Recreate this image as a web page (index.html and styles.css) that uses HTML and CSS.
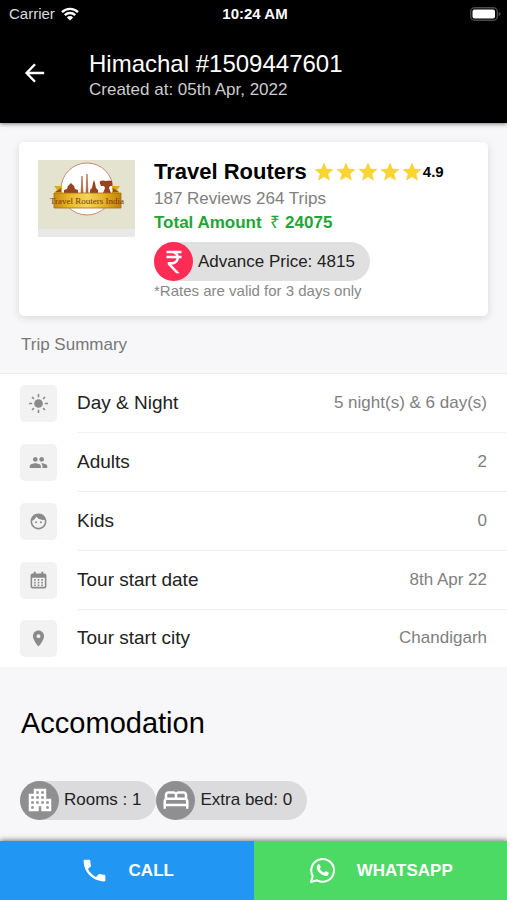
FILE: index.html
```html
<!DOCTYPE html>
<html lang="en">
<head>
<meta charset="utf-8">
<meta name="viewport" content="width=device-width, initial-scale=1">
<title>Himachal #1509447601</title>
<link rel="stylesheet" href="styles.css">
</head>
<body>
<header class="top">
  <div class="status">
    <span class="carrier">Carrier
      <svg class="wifi" viewBox="0 0 18 14" aria-hidden="true"><path d="M1 5.2a11.4 11.4 0 0 1 16 0M3.8 8.1a7.4 7.4 0 0 1 10.4 0" fill="none" stroke="currentColor" stroke-width="2.4"/><path d="M9 13.6 5.9 10.4a4.4 4.4 0 0 1 6.2 0z" fill="currentColor"/></svg>
    </span>
    <span class="clock">10:24 AM</span>
    <svg class="battery" viewBox="0 0 31 14" aria-hidden="true"><rect x=".7" y=".7" width="26.6" height="12.6" rx="4" fill="none" stroke="#4b4b4b" stroke-width="1.4"/><rect x="2.500" y="2.500" width="22.500" height="9" rx="2" fill="#fff"/><path d="M28.6 5v4q2-.6 2-2t-2-2z" fill="#4b4b4b"/></svg>
  </div>
  <div class="bar">
    <button class="back" type="button" aria-label="Back">
      <svg viewBox="0 0 24 24" aria-hidden="true"><path d="M22 12H3.500M12 2.500 2.800 12l9.200 9.500" fill="none" stroke="currentColor" stroke-width="2.600"/></svg>
    </button>
    <div>
      <h1 class="title">Himachal #1509447601</h1>
      <p class="created">Created at: 05th Apr, 2022</p>
    </div>
  </div>
</header>

<main class="content">
  <section class="card">
    <svg class="logo" viewBox="0 0 97 77" role="img" aria-label="Travel Routers India">
      <defs>
        <linearGradient id="gold"><stop offset="0" stop-color="#c98a0c"/><stop offset=".25" stop-color="#e9bd2c"/><stop offset=".5" stop-color="#f2d65c"/><stop offset=".75" stop-color="#e3b021"/><stop offset="1" stop-color="#bf7f08"/></linearGradient>
      </defs>
      <rect width="97" height="77" fill="#e9e9e9"/>
      <rect width="97" height="69" fill="#e4e3d0"/>
      <circle cx="49" cy="29" r="26" fill="#fff" stroke="#c98b74"/>
      <path d="M16 26h8v8h-8l3-4zM82 26h-8v8h8l-3-4z" fill="#e0a81c"/>
      <path d="m17 32 6-4v4zM81 32l-6-4v4z" fill="#a14a16"/>
      <g fill="#96441f">
        <path d="M26 33v-3l3-1 1-3 3-3 3 3 1 3 3 1v3z"/>
        <path d="m43 33 1-17 1 17zM48 33l1-19 1 19z" stroke="#b87545" stroke-width=".8"/>
        <path d="M52 33v-3l2-2 1-5 1-3 1 3 1 5 2 2v3z"/>
        <path d="M62 21q3-1 6 0 3-1 6 0v5h-2l-1 2 2 5H65l2-5-1-2h-3q-2-3-1-5z"/>
      </g>
      <path d="M16 33h67v15H16z" fill="url(#gold)" stroke="#a86d0a" stroke-width=".8"/>
      <text x="49" y="44" class="logo-text">Travel Routers India</text>
    </svg>
    <div class="info">
      <div class="agency">
        <h2 class="name">Travel Routers</h2>
        <span class="rating">
          <svg class="stars" viewBox="0 0 108 20" role="img" aria-label="5 stars">
            <defs><path id="star" d="m10 1.2 2.4 5.9 6.4.5-4.900 4.100 1.500 6.200-5.400-3.300-5.400 3.300 1.500-6.200-4.900-4.100 6.400-.5z" fill="#f9d62f" stroke="#f5c934" stroke-width=".6"/></defs>
            <use href="#star" x="-1"/><use href="#star" x="21"/><use href="#star" x="43"/><use href="#star" x="65"/><use href="#star" x="87"/>
          </svg>
          <b class="score">4.9</b>
        </span>
      </div>
      <p class="reviews">187 Reviews 264 Trips</p>
      <p class="total">Total Amount <span class="amount"><span class="currency">₹</span> 24075</span></p>
      <span class="chip chip-price">
        <span class="chip-icon"><svg viewBox="0 0 24 24" aria-hidden="true"><path d="M13.66 7C13.1 5.82 11.900 5 10.500 5H6V3h12v2h-3.260c.48.58.84 1.260 1.050 2H18v2h-2.020c-.25 2.800-2.610 5-5.480 5h-.73l6.730 7h-2.770L7 14v-2h3.500c1.760 0 3.220-1.300 3.460-3H6V7h7.660z"/></svg></span>
        Advance Price: 4815
      </span>
      <p class="note">*Rates are valid for 3 days only</p>
    </div>
  </section>

  <h2 class="section-label">Trip Summary</h2>
  <dl class="summary">
    <div class="row">
      <span class="tile"><svg viewBox="0 0 24 24" aria-hidden="true"><circle cx="12" cy="12" r="5.500"/><path d="M12 0v4M12 20v4M0 12h4M20 12h4M3.800 3.800l2.400 2.400M17.800 17.800l2.400 2.400M3.800 20.200l2.400-2.400M17.800 6.200l2.400-2.400" stroke="currentColor" stroke-width="2"/></svg></span>
      <div class="line"><dt>Day &amp; Night</dt><dd>5 night(s) &amp; 6 day(s)</dd></div>
    </div>
    <div class="row">
      <span class="tile"><svg viewBox="0 0 24 24" aria-hidden="true"><path d="M16 11c1.660 0 2.990-1.340 2.990-3S17.660 5 16 5s-3 1.340-3 3 1.340 3 3 3zm-8 0c1.660 0 2.990-1.340 2.990-3S9.660 5 8 5 5 6.340 5 8s1.340 3 3 3zm0 2c-2.330 0-7 1.170-7 3.500V19h14v-2.500c0-2.330-4.670-3.500-7-3.500zm8 0c-.29 0-.62.02-.97.05 1.160.84 1.970 1.970 1.970 3.450V19h6v-2.500c0-2.330-4.670-3.500-7-3.500z"/></svg></span>
      <div class="line"><dt>Adults</dt><dd>2</dd></div>
    </div>
    <div class="row">
      <span class="tile"><svg viewBox="0 0 24 24" aria-hidden="true"><path d="M9 11.750a1.250 1.250 0 1 0 0 2.500 1.250 1.250 0 0 0 0-2.500zm6 0a1.250 1.250 0 1 0 0 2.500 1.250 1.250 0 0 0 0-2.500zM12 2C6.480 2 2 6.480 2 12s4.480 10 10 10 10-4.480 10-10S17.520 2 12 2zm0 18c-4.410 0-8-3.590-8-8 0-.29.02-.58.05-.86 2.360-1.050 4.230-2.980 5.210-5.370C11.070 8.330 14.050 10 17.420 10c.78 0 1.530-.09 2.250-.26.21.71.33 1.470.33 2.260 0 4.410-3.590 8-8 8z"/></svg></span>
      <div class="line"><dt>Kids</dt><dd>0</dd></div>
    </div>
    <div class="row">
      <span class="tile"><svg viewBox="0 0 24 24" aria-hidden="true"><path fill-rule="evenodd" d="M6 1h2.500v2h7V1H18v2h1.500A2.500 2.500 0 0 1 22 5.500v14a2.500 2.500 0 0 1-2.500 2.500h-15A2.500 2.500 0 0 1 2 19.500v-14A2.500 2.500 0 0 1 4.500 3H6zM4 8.500V20h16V8.500z"/><path d="M6.500 13.700h2v2h-2zm4.500 0h2v2h-2zm4.500 0h2v2h-2zM11 10.200h2v2h-2zm4.500 0h2v2h-2zm-9 0h2v2h-2zM6.500 17h2v2h-2zm4.500 0h2v2h-2zm4.500 0h2v2h-2z"/></svg></span>
      <div class="line"><dt>Tour start date</dt><dd>8th Apr 22</dd></div>
    </div>
    <div class="row">
      <span class="tile"><svg viewBox="0 0 24 24" aria-hidden="true"><path d="M12 2C8.130 2 5 5.130 5 9c0 5.250 7 13 7 13s7-7.750 7-13c0-3.870-3.130-7-7-7zm0 9.500a2.500 2.500 0 0 1 0-5 2.500 2.500 0 0 1 0 5z"/></svg></span>
      <div class="line"><dt>Tour start city</dt><dd>Chandigarh</dd></div>
    </div>
  </dl>

  <h2 class="heading">Accomodation</h2>
  <div class="chips">
    <span class="chip">
      <span class="chip-icon"><svg viewBox="0 0 24 24" aria-hidden="true"><path d="M17 11V3H7v4H3v14h8v-4h2v4h8V11h-4zM7 19H5v-2h2v2zm0-4H5v-2h2v2zm0-4H5V9h2v2zm4 4H9v-2h2v2zm0-4H9V9h2v2zm0-4H9V5h2v2zm4 8h-2v-2h2v2zm0-4h-2V9h2v2zm0-4h-2V5h2v2zm4 12h-2v-2h2v2zm0-4h-2v-2h2v2z"/></svg></span>
      Rooms : 1
    </span>
    <span class="chip">
      <span class="chip-icon"><svg viewBox="0 0 24 24" aria-hidden="true"><path fill-rule="evenodd" d="M21 10.780V8c0-1.650-1.350-3-3-3h-4c-.77 0-1.470.3-2 .78-.53-.48-1.230-.78-2-.78H6C4.350 5 3 6.350 3 8v2.780c-.61.55-1 1.340-1 2.220v6h2v-2h16v2h2v-6c0-.88-.39-1.670-1-2.220zM14 7h4c.55 0 1 .45 1 1v2h-6V8c0-.55.45-1 1-1zM5 8c0-.55.45-1 1-1h4c.55 0 1 .45 1 1v2H5zm-1 7v-2c0-.55.45-1 1-1h14c.55 0 1 .45 1 1v2z"/></svg></span>
      Extra bed: 0
    </span>
  </div>
</main>

<nav class="actions" aria-label="Contact">
  <a class="action call" href="tel:1509447601">
    <svg viewBox="0 0 24 24" aria-hidden="true"><path fill="currentColor" d="M6.620 10.790c1.440 2.830 3.760 5.140 6.590 6.590l2.200-2.200c.27-.27.67-.36 1.020-.24 1.120.37 2.330.57 3.570.57.55 0 1 .45 1 1V20c0 .55-.45 1-1 1-9.390 0-17-7.610-17-17 0-.55.45-1 1-1h3.500c.55 0 1 .45 1 1 0 1.250.2 2.450.57 3.570.11.35.03.74-.25 1.020l-2.200 2.200z"/></svg>
    CALL
  </a>
  <a class="action whatsapp" href="#whatsapp">
    <svg viewBox="0 0 24 24" aria-hidden="true"><path d="m2.500 21.500 1.400-5A9.400 9.400 0 1 1 7.500 20.100z" fill="none" stroke="currentColor" stroke-width="1.700" stroke-linejoin="round"/><path fill="currentColor" d="M8.500 7c.3-.2 1-.2 1.200.2l.8 1.900c.1.300 0 .500-.2.700l-.6.800c.9 1.600 2.100 2.600 3.700 3.300l.9-1c.2-.3.500-.3.800-.2l1.800.9c.3.200.4.400.3.800-.3 1.500-1.500 2.200-2.800 2.100-3.200-.4-6.700-3.600-7.200-6.500-.1-1.200.4-2.300 1.300-3z"/></svg>
    WHATSAPP
  </a>
</nav>
</body>
</html>
```
FILE: styles.css
```css
* { box-sizing: border-box; }

body {
  margin: 0;
  min-height: 100vh;
  display: flex;
  flex-direction: column;
  background: #f7f7fa;
  color: #222;
  font-family: "Liberation Sans", Arial, sans-serif;
  font-size: 17px;
  line-height: 20px;
}

h1, h2, p, dl, dt, dd { margin: 0; font-weight: 400; }
svg { display: block; flex: none; }

.top {
  background: #000;
  color: #fff;
  box-shadow: 0 1px 4px rgba(0, 0, 0, .5);
}
.status {
  display: grid;
  grid-template-columns: 1fr auto 1fr;
  align-items: center;
  height: 27px;
  padding: 0 6px 0 9px;
  font-size: 15px;
}
.carrier { display: flex; align-items: center; gap: 6px; color: #ddd; }
.wifi { width: 18px; height: 14px; color: #fff; }
.clock { font-weight: 700; }
.battery { width: 31px; height: 14px; justify-self: end; }

.bar {
  display: flex;
  align-items: flex-start;
  gap: 32px;
  padding: 23px 16px 23px 12px;
}
.back {
  display: grid;
  place-items: center;
  width: 45px;
  height: 46px;
  padding: 0;
  border: 0;
  background: none;
  color: #fff;
}
.back svg { width: 22px; height: 22px; }
.title { margin-bottom: 2px; font-size: 24px; line-height: 28px; }
.created { color: #ccc; }

.content { flex: 1; padding-top: 19px; }

.card {
  display: flex;
  gap: 19px;
  margin: 0 19px;
  padding: 18px 19px 16px;
  border-radius: 5px;
  background: #fff;
  box-shadow: 0 2px 8px rgba(0, 0, 0, .12);
}
.logo { width: 97px; height: 77px; }
.logo-text {
  fill: #7b3413;
  font: 400 9px "Liberation Serif", serif;
  text-anchor: middle;
}
.agency {
  display: flex;
  align-items: center;
  gap: 8px;
  margin-bottom: 3px;
  line-height: 24px;
}
.name { color: #000; font-size: 22px; font-weight: 700; }
.rating { display: flex; align-items: center; }
.stars { width: 108px; height: 20px; }
.score { color: #000; font-size: 15px; }
.reviews { color: #808080; line-height: 24px; }
.total { color: #1fa637; font-weight: 700; line-height: 24px; }
.amount { margin-left: 4px; }
.currency { font-weight: 400; }
.note { color: #888; font-size: 15px; line-height: 18px; }

.chip {
  display: inline-flex;
  align-items: center;
  gap: 5px;
  height: 39px;
  padding-right: 15px;
  border-radius: 20px;
  background: #dbdbdd;
}
.chip-icon {
  display: grid;
  place-items: center;
  width: 39px;
  height: 39px;
  border-radius: 50%;
  background: #8f8f91;
  color: #fff;
}
.chip-icon svg { width: 30px; height: 30px; fill: currentColor; }
.chip-price { margin-top: 7px; background: #e0e0e0; }
.chip-price .chip-icon { background: #ff2d55; }

.section-label { padding: 19px 21px 18px; color: #777; font-size: 17px; }

.summary {
  border-top: 1px solid #ececf0;
  background: #fff;
}
.row { display: flex; align-items: center; gap: 20px; padding-left: 20px; }
.tile {
  display: grid;
  place-items: center;
  width: 37px;
  height: 37px;
  border-radius: 5px;
  background: #f2f2f2;
  color: #8a8a8a;
}
.tile svg { width: 19px; height: 19px; fill: currentColor; }
.line {
  flex: 1;
  display: flex;
  align-items: center;
  justify-content: space-between;
  min-height: 59px;
  padding-right: 20px;
  border-bottom: 1px solid #efeff1;
}
.row:last-child .line { border-bottom: 0; min-height: 57px; }
.line dt { font-size: 19px; }
.line dd { color: #808080; }

.heading { padding: 37px 21px 39px; color: #000; font-size: 29px; line-height: 38px; }
.chips { display: flex; padding: 0 20px 20px; }

.actions {
  display: flex;
  position: sticky;
  bottom: 0;
  box-shadow: 0 -1px 5px rgba(0, 0, 0, .5);
}
.action {
  flex: 1;
  display: flex;
  align-items: center;
  justify-content: center;
  gap: 20px;
  height: 59px;
  color: #fff;
  font-weight: 700;
  text-decoration: none;
}
.action svg { width: 29px; height: 29px; }
.call { background: #2196f3; }
.whatsapp { background: #4cd964; }
```
